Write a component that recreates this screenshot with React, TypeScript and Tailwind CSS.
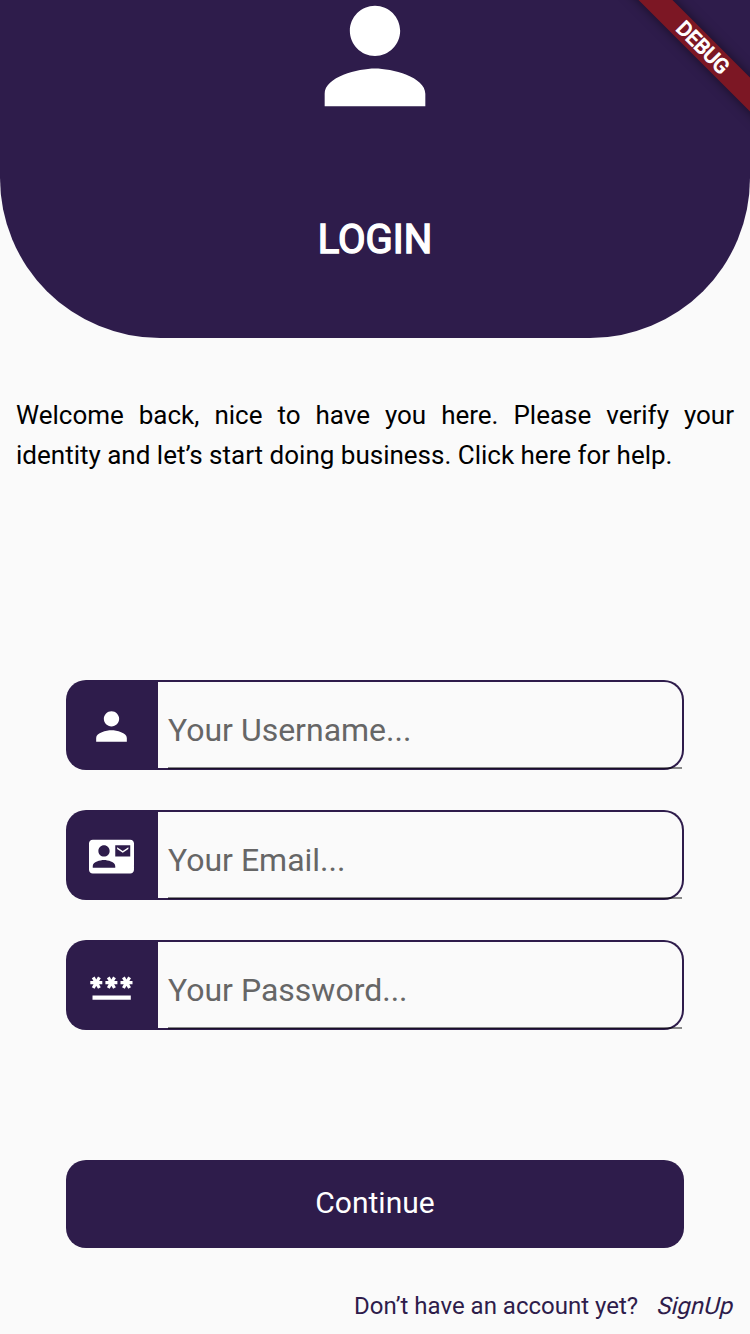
import React from "react";
import { MdPerson, MdContactMail } from "react-icons/md";

type FieldProps = { icon: React.ReactNode; label: string };

function PasswordIcon() {
  return (
    <svg width="46" height="46" viewBox="0 0 46 46" stroke="white" strokeWidth="3.2" fill="none">
      {[8.3, 23.4, 38.5].map((x) => (
        <path key={x} d={`M${x - 6} 19.7h12M${x - 3.1} 14.4l6.2 10.6M${x + 3.1} 14.4l-6.2 10.6`} />
      ))}
      <path d="M4.5 34.6h38.3" strokeWidth="4.3" />
    </svg>
  );
}

function Field({ icon, label }: FieldProps) {
  return (
    <div className="relative flex h-[90px] w-[618px]">
      <div className="flex w-[92px] shrink-0 items-center justify-center rounded-l-[20px] bg-[#2e1c4b] pt-[2px] pr-[2px] text-white">
        {icon}
      </div>
      <div className="flex flex-1 items-center rounded-r-[20px] border-y-2 border-r-2 border-[#2e1c4b] pt-[9px] pl-[10px] text-[32px] text-[#666]">
        {label}
      </div>
      <div className="absolute right-[2px] bottom-[1px] left-[102px] h-[2px] bg-black/45" />
    </div>
  );
}

export default function App() {
  return (
    <div className="relative flex h-[1334px] w-[750px] flex-col overflow-hidden bg-[#fafafa] font-['Roboto',sans-serif]">
      <header className="flex h-[338px] flex-col items-center rounded-b-[160px] bg-[#2e1c4b] text-white">
        <MdPerson size={151} className="-mt-[19px] shrink-0 -translate-x-[0.5px] -translate-y-[0.5px]" />
        <h1 className="mt-[84px] text-[40px] leading-[47px] font-normal [-webkit-text-stroke:1.5px_white]">LOGIN</h1>
      </header>
      <div className="mx-4 mt-[57px] text-[26px] leading-[40px] text-black">
        <p className="text-justify">
          Welcome back, nice to have you here. Please verify your identity and let’s start doing business. Click here for help.
        </p>
      </div>
      <main className="mt-[205px] flex flex-col items-center gap-10">
        <Field icon={<MdPerson size={46} className="translate-x-[0.5px] translate-y-[0.5px]" />} label="Your Username..." />
        <Field icon={<MdContactMail size={45} />} label="Your Email..." />
        <Field icon={<PasswordIcon />} label="Your Password..." />
      </main>
      <button className="mx-auto mt-[130px] h-[88px] w-[618px] shrink-0 rounded-[20px] bg-[#2e1c4b] pb-[3px] text-[30px] text-white">
        Continue
      </button>
      <footer className="mt-[44px] flex justify-end gap-5 pr-4 text-[24px] leading-[28px] text-[#2e1c4b]">
        <span>Don’t have an account yet?</span>
        <span className="-skew-x-[14deg]">SignUp</span>
      </footer>
      <div className="absolute top-[35px] left-[602px] flex h-[24px] w-[201px] rotate-45 items-center justify-center bg-[#7c1724] pl-[1px] text-[20.4px] font-normal text-white shadow-[0_0_12px_rgba(0,0,0,0.5)] [-webkit-text-stroke:1.1px_white]">
        DEBUG
      </div>
    </div>
  );
}
